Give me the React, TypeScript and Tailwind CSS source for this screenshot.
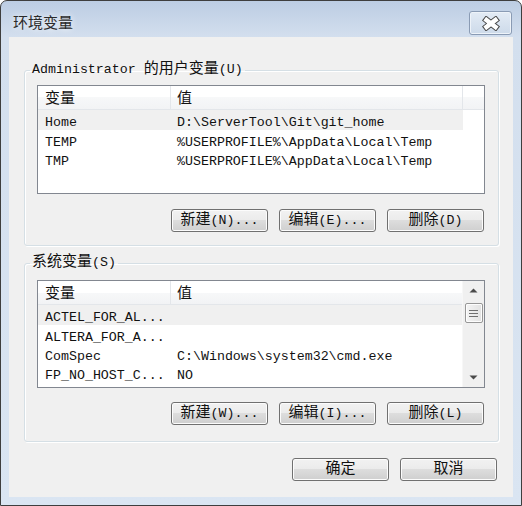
import React from "react";

const CJK = /([\u3400-\u9fff]+)/;

// SimSun-like mix: latin cells ~8px, CJK cells ~16px
const Txt = ({ s }: { s: string }) => (
  <>
    {s.split(CJK).map((p, i) =>
      i % 2 === 1 ? (
        <span key={i} className="text-[15px]">
          {p}
        </span>
      ) : (
        <React.Fragment key={i}>{p}</React.Fragment>
      )
    )}
  </>
);

const mono = "font-['Liberation_Mono','Noto_Sans_CJK_SC',monospace] text-[13.3px] text-[#111]";

const WinButton = ({ label }: { label: string }) => (
  <button
    className={`${mono} h-[23px] w-[97px] rounded-[3px] border border-[#707070] bg-[linear-gradient(180deg,#f2f2f2_0%,#ebebeb_50%,#dddddd_50%,#cfcfcf_100%)] leading-[21px] whitespace-pre shadow-[inset_0_0_0_1px_#fcfcfc]`}
  >
    <Txt s={label} />
  </button>
);

type Row = { name: string; value: string };

const Header = ({ full }: { full: boolean }) => (
  <div className="flex h-[24px] border-b border-[#e3e6ea] bg-[linear-gradient(180deg,#ffffff_0%,#ffffff_50%,#f7f8f9_50%,#f2f3f5_100%)]">
    <div className="w-[133px] shrink-0 border-r border-[#e3e6ea] pl-[7px] leading-[27px]">
      <Txt s="变量" />
    </div>
    <div className="w-[292px] shrink-0 border-r border-[#e3e6ea] pl-[6px] leading-[27px]">
      <Txt s="值" />
    </div>
    {full && <div className="flex-1" />}
  </div>
);

const Rows = ({ rows }: { rows: Row[] }) => (
  <div>
    {rows.map((r, i) => (
      <div
        key={r.name}
        className={`flex h-[19px] w-[425px] leading-[26px] whitespace-pre ${i === 0 ? "h-[20px] bg-[#f0f0f0]" : ""}`}
      >
        <div className="w-[133px] shrink-0 pl-[7px]">{r.name}</div>
        <div className="pl-[6px]">{r.value}</div>
      </div>
    ))}
  </div>
);

const Arrow = ({ up }: { up: boolean }) => (
  <svg width="9" height="5" viewBox="0 0 9 5">
    <path d={up ? "M0.5 4.5 L4.5 0.5 L8.5 4.5 Z" : "M0.5 0.5 L4.5 4.5 L8.5 0.5 Z"} fill="#4a4a4a" />
  </svg>
);

const ScrollBar = () => (
  <div className="flex w-[22px] shrink-0 flex-col items-center border-l border-[#f7f7f7] bg-[#f0f0f0]">
    <div className="flex h-[17px] w-full items-center justify-center pt-[2px]">
      <Arrow up />
    </div>
    <div className="mt-[5px] flex h-[20px] w-[18px] items-center justify-center rounded-[2px] border border-[#979797] bg-[linear-gradient(90deg,#f4f4f4,#e2e2e2)] shadow-[inset_0_0_0_1px_#fdfdfd]">
      <svg width="9" height="7" viewBox="0 0 9 7">
        <path d="M0 0.5 H9 M0 3.5 H9 M0 6.5 H9" stroke="#6f6f6f" strokeWidth="1" />
      </svg>
    </div>
    <div className="flex-1" />
    <div className="flex h-[17px] w-full items-center justify-center pb-[3px]">
      <Arrow up={false} />
    </div>
  </div>
);

const userRows: Row[] = [
  { name: "Home", value: "D:\\ServerTool\\Git\\git_home" },
  { name: "TEMP", value: "%USERPROFILE%\\AppData\\Local\\Temp" },
  { name: "TMP", value: "%USERPROFILE%\\AppData\\Local\\Temp" },
];

const sysRows: Row[] = [
  { name: "ACTEL_FOR_AL...", value: "" },
  { name: "ALTERA_FOR_A...", value: "" },
  { name: "ComSpec", value: "C:\\Windows\\system32\\cmd.exe" },
  { name: "FP_NO_HOST_C...", value: "NO" },
];

const Group = ({
  label,
  children,
  className,
}: {
  label: string;
  children: React.ReactNode;
  className: string;
}) => (
  <fieldset
    className={`ml-[15px] mr-[14px] rounded-[3px] border border-[#d5dfe5] pl-[12px] pr-[13px] shadow-[1px_1px_0_#ffffff,inset_1px_1px_0_#ffffff] ${className}`}
  >
    <legend className={`${mono} -ml-[7px] px-[2px] leading-[16px] whitespace-pre`}>
      <Txt s={label} />
    </legend>
    {children}
  </fieldset>
);

export default function App() {
  return (
    <div className="h-[506px] w-[522px] bg-white">
      <div className="flex h-[506px] w-[522px] flex-col rounded-t-[7px] border border-[#3e3e3e] bg-[linear-gradient(180deg,#bccde3_0px,#d3dfee_36px,#dae5f2_100%)]">
        {/* Title bar */}
        <div className="flex h-[36px] shrink-0 justify-between pl-[12px] pr-[9px]">
          <span className="mt-[11px] font-['Noto_Sans_CJK_SC',sans-serif] text-[15px] leading-[20px] text-[#2a2a2a] [text-shadow:0_0_6px_#ffffff]">
            环境变量
          </span>
          <div className="mt-[10px] flex h-[24px] w-[43px] items-center justify-center rounded-[3px] border border-[#8a9bb4] bg-[linear-gradient(180deg,#e3ebf5,#cddaea)] shadow-[inset_0_0_0_1px_#eef3f9]">
            <svg width="18" height="15" viewBox="0 0 18 15">
              <path d="M4.5 4 L13.5 11 M13.5 4 L4.5 11" stroke="#454545" strokeWidth="6.5" strokeLinecap="square" />
              <path d="M4.5 4 L13.5 11 M13.5 4 L4.5 11" stroke="#ffffff" strokeWidth="4.5" strokeLinecap="square" />
            </svg>
          </div>
        </div>

        {/* Client area */}
        <div className="mx-[8px] mb-[8px] flex flex-1 flex-col bg-[#f0f0f0]">
          <Group label="Administrator 的用户变量(U)" className="mt-[25px] pt-[7px] pb-[13px]">
            <div className={`${mono} h-[109px] w-[448px] overflow-hidden border border-[#828790] bg-white`}>
              <Header full />
              <Rows rows={userRows} />
            </div>
            <div className="mt-[15px] flex justify-end gap-[11px] pr-[1px]">
              <WinButton label="新建(N)..." />
              <WinButton label="编辑(E)..." />
              <WinButton label="删除(D)" />
            </div>
          </Group>

          <Group label="系统变量(S)" className="mt-[9px] pt-[9px] pb-[16px]">
            <div className={`${mono} flex h-[108px] w-[448px] overflow-hidden border border-[#828790] bg-white`}>
              <div className="w-[424px] shrink-0 overflow-hidden">
                <Header full={false} />
                <Rows rows={sysRows} />
              </div>
              <ScrollBar />
            </div>
            <div className="mt-[14px] flex justify-end gap-[11px] pr-[1px]">
              <WinButton label="新建(W)..." />
              <WinButton label="编辑(I)..." />
              <WinButton label="删除(L)" />
            </div>
          </Group>

          <div className="mt-[16px] flex justify-end gap-[11px] pr-[16px]">
            <WinButton label="确定" />
            <WinButton label="取消" />
          </div>
        </div>
      </div>
    </div>
  );
}
